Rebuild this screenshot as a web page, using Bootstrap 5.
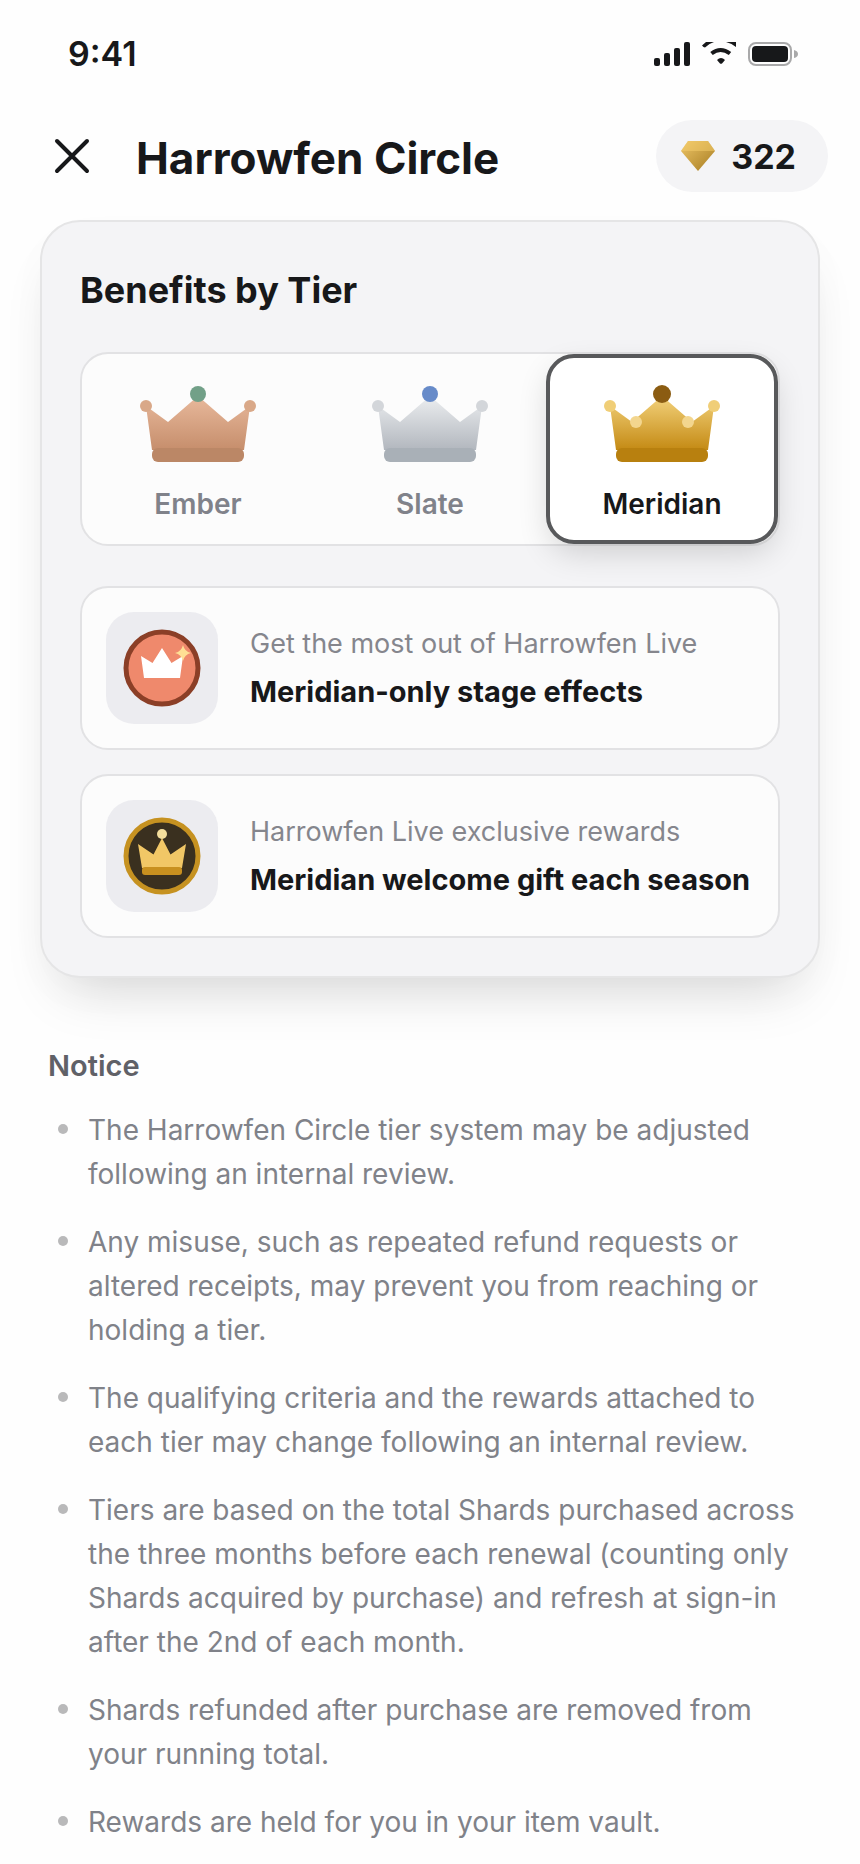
<!DOCTYPE html>
<html lang="en">
<head>
  <meta charset="UTF-8">
  <title>Harrowfen Circle</title>
  <meta name="viewport" content="width=device-width, initial-scale=1">

  <!-- Bootstrap 5 -->
  <link href="https://cdn.jsdelivr.net/npm/bootstrap@5.3.3/dist/css/bootstrap.min.css" rel="stylesheet">

  <style>
    body {
      font-family: Inter, "Liberation Sans", sans-serif;
      color: #17181a;
      background: #fefefe;
    }
    svg { display: block; flex: none; }

    .status-bar { height: 108px; padding: 0 62px 0 68px; }
    .status-time { font-size: 34px; line-height: 40px; }

    .app-header { height: 96px; padding: 0 32px 0 40px; }
    .close-btn { width: 64px; height: 64px; }
    .app-title { font-size: 44px; line-height: 56px; }
    .shard-pill { height: 72px; padding: 0 32px 0 25px; font-size: 34px; background: #f4f4f6; color: inherit; }

    .tier-panel {
      margin: 16px 40px 0;
      padding: 38px;
      border: 2px solid #e5e5e6;
      border-radius: 40px;
      background: #f4f4f6;
      box-shadow: 0 16px 48px rgba(0, 0, 0, .02), 0 32px 56px -24px rgba(0, 0, 0, .17);
    }
    .panel-title { font-size: 36px; line-height: 48px; margin: 6px 0 38px; }

    .tier-tabs, .benefit {
      border: 2px solid #e2e2e4;
      border-radius: 28px;
      background: #fcfcfc;
    }
    .tier-tab {
      flex: 1 1 0;
      padding: 24px 0 18px;
      border: 4px solid transparent;
      border-radius: 28px;
      background: none;
      color: #80828a;
      font-size: 28px;
      line-height: 36px;
    }
    .tier-tab.active {
      border-color: #58595b;
      background: #fff;
      color: #17181a;
      box-shadow: 0 12px 32px -4px rgba(0, 0, 0, .16);
    }

    .benefit { padding: 24px; }
    .benefit-tile { border-radius: 28px; background: #ececf0; }
    .benefit-sub { font-size: 27px; line-height: 40px; color: #85868d; }
    .benefit-name { font-size: 29px; line-height: 40px; }

    .notice { padding: 66px 48px 20px; color: #808289; font-size: 28px; line-height: 44px; }
    .notice-title { font-size: 29px; line-height: 44px; color: #606167; }
    .notice-list li::before {
      content: "";
      flex: none;
      width: 10px;
      height: 10px;
      margin: 16px 20px 0 10px;
      border-radius: 50%;
      background: #b9b9ba;
    }
  </style>
</head>
<body>

  <!-- Status bar -->
  <div class="status-bar d-flex align-items-center justify-content-between">
    <span class="status-time fw-semibold">9:41</span>
    <div class="d-flex align-items-center" aria-hidden="true">
      <svg width="144" height="24" viewBox="0 0 144 24" fill="#17181a">
        <rect x="0" y="16" width="6" height="8" rx="2"/>
        <rect x="10" y="11" width="6" height="13" rx="2"/>
        <rect x="20" y="6" width="6" height="18" rx="2"/>
        <rect x="30" y="0" width="6" height="24" rx="2"/>
        <path d="M48 3.500L52 0H60Q55 1.500 51 5.500Q49.500 5.500 48 3.500zM72 0H82V5Q78 1.500 72 0z"/>
        <path d="M57.500 11.500Q66.500 4.500 76 11.500" fill="none" stroke="#17181a" stroke-width="4"/>
        <path d="M63 18q4-4 8 0l-3 3.400q-1 .9-2 0z"/>
        <rect x="95" y="1" width="42" height="22" rx="7" fill="none" stroke="#a9a9aa" stroke-width="2"/>
        <rect x="98" y="4" width="36" height="16" rx="4"/>
        <path d="M140 8q4 1 4 4t-4 4z" fill="#a9a9aa"/>
      </svg>
    </div>
  </div>

  <!-- Header -->
  <header class="app-header d-flex align-items-center">
    <button type="button" class="close-btn btn p-0 border-0 d-flex align-items-center justify-content-center" aria-label="Close">
      <svg width="36" height="36" viewBox="0 0 36 36" stroke="#17181a" stroke-width="4" stroke-linecap="round">
        <path d="M3 3L33 33M33 3L3 33"/>
      </svg>
    </button>
    <h1 class="app-title fw-bold mb-0 ms-4 ps-2 pt-1 me-auto">Harrowfen Circle</h1>
    <button type="button" class="shard-pill btn border-0 rounded-pill fw-bold d-flex align-items-center gap-3">
      <svg width="34" height="30" viewBox="0 0 34 30" aria-hidden="true">
        <defs>
          <linearGradient id="gemBody" x1="0" y1="0" x2="1" y2="1">
            <stop offset="0" stop-color="#eec566"/>
            <stop offset="1" stop-color="#a67c22"/>
          </linearGradient>
        </defs>
        <path d="M7 0h20l7 10-17 20L0 10z" fill="url(#gemBody)"/>
        <path d="M7 0h20l7 10H0z" fill="#f5cd6c" opacity=".5"/>
      </svg>
      322
    </button>
  </header>

  <!-- Tiers and their benefits -->
  <section class="tier-panel">
    <h2 class="panel-title fw-bold">Benefits by Tier</h2>

    <div class="tier-tabs d-flex" role="tablist">
      <button type="button" class="tier-tab fw-semibold d-flex flex-column align-items-center gap-3" role="tab" aria-selected="false">
        <svg width="120" height="88" viewBox="0 0 120 88" aria-hidden="true">
          <defs>
            <linearGradient id="emberFill" x1="0" y1="0" x2="0" y2="1">
              <stop offset="0" stop-color="#e8b99c"/>
              <stop offset="1" stop-color="#c68e6c"/>
            </linearGradient>
          </defs>
          <path d="M8 24L30 40 60 14 90 40 112 24 106 68H14z" fill="url(#emberFill)"/>
          <rect x="14" y="66" width="92" height="14" rx="6" fill="#bb8766"/>
          <circle cx="8" cy="24" r="6" fill="#d9a888"/>
          <circle cx="112" cy="24" r="6" fill="#d9a888"/>
          <circle cx="60" cy="12" r="8" fill="#72a088"/>
        </svg>
        Ember
      </button>
      <button type="button" class="tier-tab fw-semibold d-flex flex-column align-items-center gap-3" role="tab" aria-selected="false">
        <svg width="120" height="88" viewBox="0 0 120 88" aria-hidden="true">
          <defs>
            <linearGradient id="slateFill" x1="0" y1="0" x2="0" y2="1">
              <stop offset="0" stop-color="#eceef0"/>
              <stop offset="1" stop-color="#b2b7be"/>
            </linearGradient>
          </defs>
          <path d="M8 24L30 40 60 14 90 40 112 24 106 68H14z" fill="url(#slateFill)"/>
          <rect x="14" y="66" width="92" height="14" rx="6" fill="#a9b0b7"/>
          <circle cx="8" cy="24" r="6" fill="#d3d6da"/>
          <circle cx="112" cy="24" r="6" fill="#d3d6da"/>
          <circle cx="60" cy="12" r="8" fill="#678bc9"/>
        </svg>
        Slate
      </button>
      <button type="button" class="tier-tab active fw-semibold d-flex flex-column align-items-center gap-3" role="tab" aria-selected="true">
        <svg width="120" height="88" viewBox="0 0 120 88" aria-hidden="true">
          <defs>
            <linearGradient id="meridianFill" x1="0" y1="0" x2="0" y2="1">
              <stop offset="0" stop-color="#f3d27c"/>
              <stop offset="1" stop-color="#c48a14"/>
            </linearGradient>
          </defs>
          <path d="M8 24L30 40 60 14 90 40 112 24 106 68H14z" fill="url(#meridianFill)"/>
          <rect x="14" y="66" width="92" height="14" rx="6" fill="#b8800f"/>
          <circle cx="8" cy="24" r="6" fill="#f0ce77"/>
          <circle cx="112" cy="24" r="6" fill="#f0ce77"/>
          <circle cx="34" cy="40" r="6" fill="#f3d68e"/>
          <circle cx="86" cy="40" r="6" fill="#f3d68e"/>
          <circle cx="60" cy="12" r="9" fill="#8b5c12"/>
        </svg>
        Meridian
      </button>
    </div>

    <div class="d-flex flex-column gap-4 mt-4 pt-3">
      <div class="benefit d-flex align-items-center">
        <svg class="benefit-tile" width="112" height="112" viewBox="0 0 112 112" aria-hidden="true">
          <circle cx="56" cy="56" r="36" fill="#ef896c" stroke="#8b3f27" stroke-width="5"/>
          <path d="M35 44L46.500 51 56 36 65.500 51 77 44 74 66H38z" fill="#fff"/>
          <path d="M77 33Q78.500 39.500 85 41 78.500 42.500 77 49 75.500 42.500 69 41 75.500 39.500 77 33z" fill="#ffdf94"/>
        </svg>
        <div class="ms-4 ps-2">
          <div class="benefit-sub">Get the most out of Harrowfen Live</div>
          <div class="benefit-name fw-bold mt-2">Meridian-only stage effects</div>
        </div>
      </div>

      <div class="benefit d-flex align-items-center">
        <svg class="benefit-tile" width="112" height="112" viewBox="0 0 112 112" aria-hidden="true">
          <circle cx="56" cy="56" r="36" fill="#3a301f" stroke="#c69221" stroke-width="5"/>
          <path d="M32 44L47.500 54.500 56 38 64.500 54.500 80 44 76 68H36z" fill="#f1c766"/>
          <rect x="36" y="67" width="40" height="8" rx="3" fill="#c8901f"/>
          <circle cx="56" cy="34" r="5" fill="#f3dd9c"/>
        </svg>
        <div class="ms-4 ps-2">
          <div class="benefit-sub">Harrowfen Live exclusive rewards</div>
          <div class="benefit-name fw-bold mt-2">Meridian welcome gift each season</div>
        </div>
      </div>
    </div>
  </section>

  <!-- Notice -->
  <section class="notice">
    <h2 class="notice-title fw-semibold mb-3 pb-1">Notice</h2>
    <ul class="notice-list list-unstyled d-flex flex-column gap-4 mb-0">
      <li class="d-flex">The Harrowfen Circle tier system may be adjusted following an internal review.</li>
      <li class="d-flex">Any misuse, such as repeated refund requests or altered receipts, may prevent you from reaching or holding a tier.</li>
      <li class="d-flex">The qualifying criteria and the rewards attached to each tier may change following an internal review.</li>
      <li class="d-flex">Tiers are based on the total Shards purchased across the three months before each renewal (counting only Shards acquired by purchase) and refresh at sign-in after the 2nd of each month.</li>
      <li class="d-flex">Shards refunded after purchase are removed from your running total.</li>
      <li class="d-flex">Rewards are held for you in your item vault.</li>
    </ul>
  </section>

  <!-- Bootstrap JS -->
  <script src="https://cdn.jsdelivr.net/npm/bootstrap@5.3.3/dist/js/bootstrap.bundle.min.js"></script>

  <script>
    const tabs = document.querySelectorAll('.tier-tab');

    tabs.forEach(tab => {
      tab.addEventListener('click', () => {
        tabs.forEach(other => {
          other.classList.toggle('active', other === tab);
          other.setAttribute('aria-selected', other === tab);
        });
      });
    });
  </script>

</body>
</html>
